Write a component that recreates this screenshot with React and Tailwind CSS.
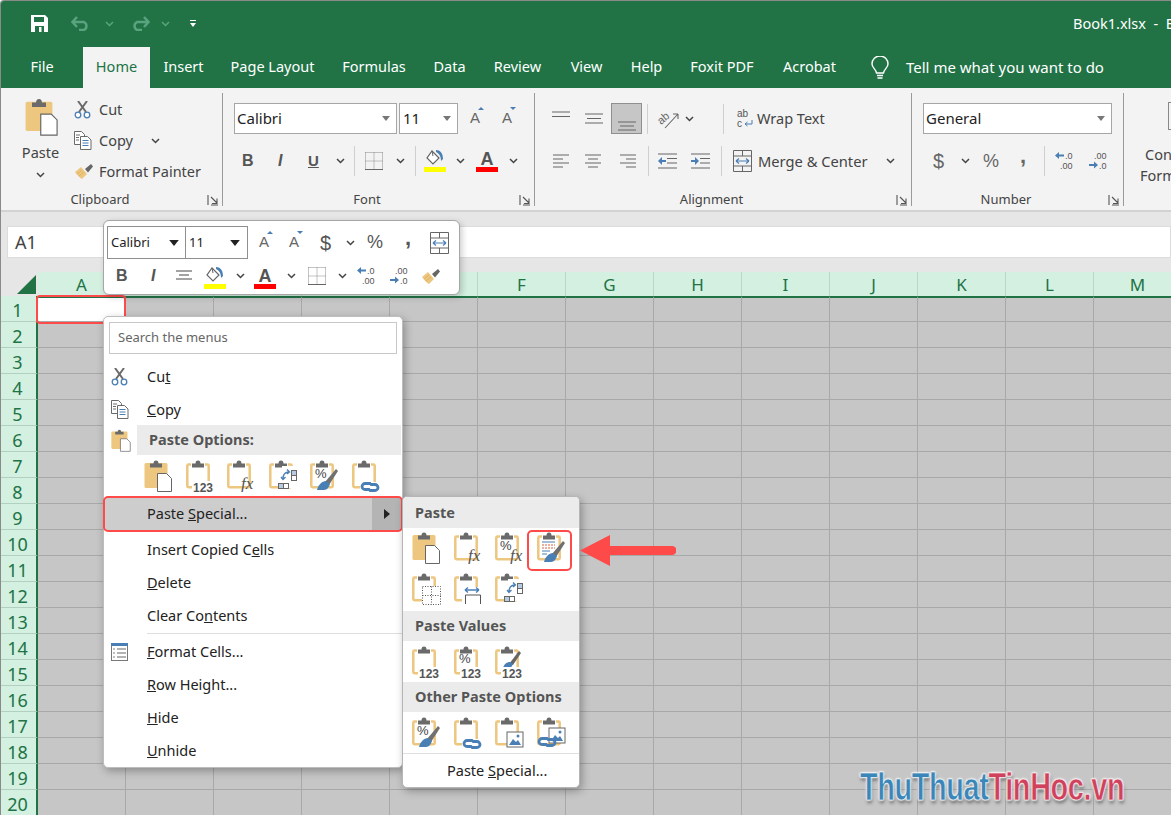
import React from "react";

const TAN = "#edc67f";
const BLUE = "#4a7fb5";
const GR = "#6a6a6a";
const SANS = "'Liberation Sans',sans-serif";

const Chev = ({ className = "", c = "#444" }) => (
  <svg width="9" height="6" viewBox="0 0 9 6" className={`shrink-0 ${className}`}><path d="M1 1l3.500 3.500L8 1" fill="none" stroke={c} strokeWidth="1.500" /></svg>
);
const Tri = ({ c = "#777", w = 8, h = 5, className = "" }) => (
  <svg width={w} height={h} viewBox="0 0 8 5" className={className}><path d="M0 0h8L4 5z" fill={c} /></svg>
);
const Launcher = () => (
  <svg width="12" height="11" viewBox="0 0 12 11" className="shrink-0"><path d="M1 0v10M4 2l6 6M10 3.500V8.500H5M4 10h7" fill="none" stroke="#555" strokeWidth="1.100" /></svg>
);
const Scissors = ({ s = 18 }) => (
  <svg width={s} height={s} viewBox="0 0 18 18"><path d="M4 0l8 11M13 0L5 11" stroke={GR} strokeWidth="2" /><circle cx="4" cy="14" r="2.800" fill="#fff" stroke={BLUE} strokeWidth="1.300" /><circle cx="13" cy="14" r="2.800" fill="#fff" stroke={BLUE} strokeWidth="1.300" /></svg>
);
const CopyIcon = () => (
  <svg width="18" height="19" viewBox="0 0 18 19"><path d="M.5.5h7l3 3v10H.5z" fill="#fff" stroke={GR} /><path d="M6.500 5.500h7l3.500 3.500v9.500H6.500z" fill="#fff" stroke={GR} /><path d="M2 4h4M2 6.500h3M2 9h3" stroke={GR} /><path d="M8.500 9.500h6M8.500 12h6M8.500 14.500h6" stroke={BLUE} /></svg>
);
const Painter = ({ s = 20 }) => (
  <svg width={s} height={s * 0.85} viewBox="0 0 20 17"><path d="M1 9l6-5 6 7-5 5C6 15 3 12 1 9z" fill={TAN} /><path d="M3 11l5-4M5 13l5-4" stroke="#d9ae62" strokeWidth=".8" /><path d="M11 6l6-5 2 2.500-5 6z" fill="#666" /></svg>
);
const Fill = () => (
  <svg width="22" height="24" viewBox="0 0 22 24"><path d="M8 2l7 7-6 6-6-6z" fill="#fff" stroke="#666" strokeWidth="1.200" /><path d="M8 2l1 5" stroke="#666" /><path d="M12 1c4 0 7 3 7 9l-2 2c0-4-1-7-5-9z" fill={BLUE} /><rect x="0" y="18" width="22" height="5" fill="#ffff00" /></svg>
);
const FontA = () => (
  <svg width="22" height="24" viewBox="0 0 22 24"><text x="11" y="16" textAnchor="middle" fontFamily={SANS} fontWeight="700" fontSize="18" fill="#555">A</text><rect x="0" y="18" width="22" height="5" fill="#f00" /></svg>
);
const GrowA = ({ up }) => (
  <svg width="16" height="19" viewBox="0 0 16 19"><text x="6" y="16" textAnchor="middle" fontFamily={SANS} fontSize="15" fill="#666">A</text><path d={up ? "M9 3h6l-3-3z" : "M9 0h6l-3 3z"} fill={BLUE} /></svg>
);
const Borders = () => (
  <svg width="18" height="18" viewBox="0 0 18 18" className="shrink-0"><path d="M.5.5h17M.5 9h17M9 .5v17M.5.5v17M17.5.5v17" fill="none" stroke="#888" strokeDasharray="1 1" /><path d="M0 17.500h18" stroke="#666" /></svg>
);
const Lines = ({ w = 20, ys, xs }) => (
  <svg width={w} height="16" viewBox={`0 0 ${w} 16`} className="shrink-0">
    {ys.map((y, i) => <path key={i} d={`M${xs[i][0]} ${y}H${xs[i][1]}`} stroke="#666" strokeWidth="1.200" />)}
  </svg>
);
const Merge = () => (
  <svg width="19" height="22" viewBox="0 0 19 22" className="shrink-0"><path d="M.5.5h18v21H.5zM.5 6h18M.5 16h18M9.500.5V6M9.500 16v5.500" fill="none" stroke="#666" /><path d="M3 11h13M3 11l3-2.500M3 11l3 2.500M16 11l-3-2.500M16 11l-3 2.500" fill="none" stroke={BLUE} strokeWidth="1.200" /></svg>
);
const Indent = ({ rev }) => (
  <svg width="19" height="16" viewBox="0 0 19 16"><path d="M0 1h19M9 5.500h10M9 10h10M0 15h19" stroke="#666" strokeWidth="1.100" /><path d={rev ? "M0 8l4-4v3h4v2H4v3z" : "M8 8L4 4v3H0v2h4v3z"} fill={BLUE} /></svg>
);
const Dec = ({ inc }) => (
  <svg width="20" height="20" viewBox="0 0 20 20" fontFamily={SANS} fontSize="9" fill="#555" className="shrink-0">
    {inc ? <><text x="5" y="8">.00</text><text x="10" y="18">.0</text><path d="M9 14l-4-3.500v2.500H0v2h5v2.500z" fill={BLUE} /></> : <><text x="10" y="8">.0</text><text x="5" y="18">.00</text><path d="M0 4.500l4-3.500v2.500h5v2H4V8z" fill={BLUE} /></>}
  </svg>
);
const Wrap = () => (
  <svg width="16" height="20" viewBox="0 0 16 20" fontFamily={SANS} fontSize="10" fill="#555"><text x="0" y="8">ab</text><text x="0" y="18">c</text><path d="M15 11v4H8m0 0l2.500-2M8 15l2.500 2" fill="none" stroke={BLUE} /></svg>
);
const Orient = () => (
  <svg width="24" height="20" viewBox="0 0 24 20" className="overflow-visible"><text x="1" y="12" transform="rotate(-40 8 10)" fontFamily={SANS} fontSize="11" fill="#666">ab</text><path d="M8 19L21 5m0 0h-5m5 0v5" fill="none" stroke="#666" strokeWidth="1.100" /></svg>
);
const Sep = ({ className = "" }) => <div className={`w-px h-[30px] bg-[#cfcfcf] shrink-0 ${className}`} />;

const T123 = ({ x = 7 }) => <><rect x={x - 1} y="21" width={31 - x} height="11" fill="#fff" /><text x={x} y="31.500" fontFamily={SANS} fontWeight="700" fontSize="12" fill="#555">123</text></>;
const Fx = ({ x = 14 }) => <text x={x} y="29" fontFamily="'Liberation Serif',serif" fontStyle="italic" fontSize="17" fill="#555">fx</text>;
const Pct = ({ x = 5, y = 18 }) => <text x={x} y={y} fontFamily={SANS} fontSize="13" fill="#444">%</text>;
const BrushO = () => <><path d="M15 22L26 9l2 2-9 14z" fill="#707070" /><path d="M7 30c1-5 5-9 9-9l4 3c-1 3-3 6-6 6z" fill={BLUE} /></>;
const Link = ({ y = 23, x = 0, bg = true }) => <>{bg && <rect x={x + 8} y={y - 1} width="21" height="10" fill="#fff" />}<path d={`M${x + 17} ${y + 6.5}h-4a3 3 0 010-6h5M${x + 19} ${y + 1.5}h4a3 3 0 010 6h-5`} fill="none" stroke={BLUE} strokeWidth="2.800" strokeLinecap="round" /></>;
const Doc = () => <path d="M13.500 13.500h9l5 5v13h-14z" fill="#fff" stroke="#666" />;
const Trans = () => <><rect x="13" y="6" width="15" height="22" fill="#fff" /><rect x="22.500" y="10.500" width="5" height="5" fill="#b6cbe0" stroke="#666" /><rect x="22.500" y="15.500" width="5" height="5" fill="#fff" stroke="#666" /><rect x="9.500" y="23.500" width="5" height="5" fill="#b6cbe0" stroke="#666" /><rect x="14.500" y="23.500" width="5" height="5" fill="#fff" stroke="#666" /><path d="M20 12c-4 0-6 2-6 7m-2-2l2 2.500 2.500-2.500M18 9.500l2.500 2.500L18 14" fill="none" stroke={BLUE} strokeWidth="1.300" /></>;
const Pic = ({ x = 12, y = 15 }) => <><rect x={x} y={y} width="16" height="15" fill="#fff" stroke="#666" /><path d={`M${x + 2} ${y + 13}l4-6 3 3 2-2 3 5z`} fill={BLUE} /><circle cx={x + 11} cy={y + 4} r="1.500" fill={BLUE} /></>;

const Clip = ({ kind = "", full, w = 30, h = 32, className = "" }) => (
  <svg width={w} height={h} viewBox="0 0 30 32" className={`shrink-0 ${className}`}>
    {full ? <rect x="0.500" y="3" width="23" height="25" rx="1.500" fill={TAN} /> : <path d="M5 4.500H2.500a1.200 1.200 0 00-1.200 1.200V26a1.200 1.200 0 001.200 1.200h19a1.200 1.200 0 001.200-1.200V5.700a1.200 1.200 0 00-1.200-1.200H19" fill="none" stroke={TAN} strokeWidth="2.500" />}
    <path d="M6 7.500V3.500h3.500Q9.500.5 12 .5t2.500 3H18v4z" fill={GR} />
    {kind === "doc" && <Doc />}
    {kind === "123" && <T123 />}
    {kind === "fx" && <Fx />}
    {kind === "pctfx" && <><Pct /><Fx x={15} /></>}
    {kind === "trans" && <Trans />}
    {kind === "pctbrush" && <><Pct /><BrushO /></>}
    {kind === "link" && <Link />}
    {kind === "fmt" && <><path d="M5 10h13" stroke={BLUE} /><path d="M5 13h13M5 16h13" stroke="#d9603b" strokeDasharray="2 1" /><path d="M5 19h8M5 22h5" stroke={BLUE} /><BrushO /></>}
    {kind === "border" && <><rect x="10" y="13" width="19" height="19" fill="#fff" /><path d="M10.500 13.500h18v18h-18zM10.500 22.500h18M19.500 13.500v18" fill="none" stroke="#555" strokeDasharray="1 1.500" /></>}
    {kind === "colw" && <><rect x="8" y="14" width="22" height="18" fill="#fff" /><path d="M11 17h14M11 17l3-2.500M11 17l3 2.500M25 17l-3-2.500M25 17l-3 2.500" fill="none" stroke={BLUE} strokeWidth="1.400" /><path d="M11.500 31v-9h15v9" fill="none" stroke="#555" /></>}
    {kind === "pct123" && <><Pct x={5} y={17} /><T123 /></>}
    {kind === "brush123" && <><path d="M14 18L24 5l2 2-8 12z" fill="#666" /><path d="M8 22c1-4 4-6 7-6l3 2c-1 2-2 4-3 4z" fill={BLUE} /><T123 /></>}
    {kind === "pic" && <Pic />}
    {kind === "linkpic" && <><Pic x={12} y={11} /><Link x={-8} y={21} bg={false} /></>}
  </svg>
);

const Tab = ({ w, children, active }) => (
  <div className={`${w} h-full flex items-center justify-center shrink-0 pb-[1px] ${active ? "bg-[#f3f3f3] text-[#217346]" : "text-white"}`}>{children}</div>
);

const Group = ({ w, label, children }) => (
  <div className={`${w} shrink-0 flex flex-col relative`}>
    <div className="h-[102px] flex flex-col">{children}</div>
    <div className="h-[20px] flex items-center text-[13px] text-[#444] pl-[12px] pr-[4px]">
      <span className="flex-1 text-center pr-[20px]">{label}</span>
      <Launcher />
    </div>
    <div className="absolute right-0 top-[5px] bottom-[4px] w-px bg-[#9a9a9a]" />
  </div>
);

const Menu = ({ icon, children }) => (
  <div className="h-[33px] flex items-center text-[14.500px] text-[#222] shrink-0">
    <div className="w-[43px] flex justify-start pl-[7px] shrink-0">{icon}</div>
    {children}
  </div>
);
const SubHead = ({ children, className = "" }) => (
  <div className={`h-[30px] bg-[#ebebeb] flex items-center pl-[12px] font-bold text-[14.500px] text-[#555] shrink-0 ${className}`}>{children}</div>
);
const IconRow = ({ items, className = "" }) => (
  <div className={`flex gap-[11.500px] pl-[9px] ${className}`}>
    {items.map((k, i) => <Clip key={i} kind={k} full={k === "doc"} />)}
  </div>
);

const cols = "ABCDEFGHIJKLM".split("");
const rows = Array.from({ length: 20 }, (_, i) => i + 1);

export default function App() {
  return (
    <div className="relative w-[1171px] h-[815px] overflow-hidden bg-[#e6e6e6] border-t border-l border-[#8a8a8a] rounded-tl-[4px]" style={{ fontFamily: "'Noto Sans',sans-serif" }}>
      {/* Title bar */}
      <div className="h-[45px] bg-[#217346] flex items-center text-white relative">
        <svg width="17" height="17" viewBox="0 0 17 17" className="ml-[30px] shrink-0"><path d="M0 0h14l3 3v14H0z" fill="#fff" /><rect x="3" y="2" width="10" height="5" fill="#217346" /><rect x="4" y="11" width="9" height="6" fill="#217346" /><rect x="8" y="12" width="2.500" height="5" fill="#fff" /></svg>
        <svg width="19" height="15" viewBox="0 0 19 15" className="ml-[23px] shrink-0"><path d="M2 6h11a4.500 4.500 0 010 8H8M6 1L1.500 6 6 11" fill="none" stroke="#5aa37f" strokeWidth="2.500" /></svg>
        <Chev c="#5aa37f" className="ml-[15px]" />
        <svg width="19" height="15" viewBox="0 0 19 15" className="ml-[17px] shrink-0"><path d="M17 6H6a4.500 4.500 0 000 8h5M13 1l4.500 5-4.500 5" fill="none" stroke="#5aa37f" strokeWidth="2.500" /></svg>
        <Chev c="#5aa37f" className="ml-[11px]" />
        <svg width="6" height="7" viewBox="0 0 6 7" className="ml-[20px]"><path d="M0 0h6v1H0zM0 3h6L3 7z" fill="#fff" /></svg>
        <div className="ml-auto text-[14.500px] whitespace-nowrap w-[98px] pt-[1px]">Book1.xlsx&nbsp; -&nbsp; E</div>
      </div>
      {/* Tabs */}
      <div className="h-[42px] bg-[#217346] flex items-end text-[14.500px]">
        <div className="flex h-[41px] w-full">
          <Tab w="w-[82px]">File</Tab>
          <Tab w="w-[67px]" active>Home</Tab>
          <Tab w="w-[67px]">Insert</Tab>
          <Tab w="w-[111px]">Page Layout</Tab>
          <Tab w="w-[92px]">Formulas</Tab>
          <Tab w="w-[59px]">Data</Tab>
          <Tab w="w-[77px]">Review</Tab>
          <Tab w="w-[61px]">View</Tab>
          <Tab w="w-[59px]">Help</Tab>
          <Tab w="w-[92px]">Foxit PDF</Tab>
          <Tab w="w-[83px]">Acrobat</Tab>
          <svg width="18" height="24" viewBox="0 0 18 24" className="self-center ml-[20px] shrink-0"><path d="M5.500 17C5 13 1 12 1 8a8 8 0 0116 0c0 4-4 5-4.500 9z" fill="none" stroke="#fff" strokeWidth="1.400" /><path d="M6 19.500h6M6.500 22h5" stroke="#fff" strokeWidth="1.600" /></svg>
          <div className="self-center ml-[17px] text-white whitespace-nowrap text-[15px] pb-[1px]">Tell me what you want to do</div>
        </div>
      </div>
      {/* Ribbon */}
      <div className="h-[124px] bg-[#f3f3f3] flex text-[#444] border-b-2 border-[#d2d2d2] overflow-hidden">
        <Group w="w-[222px]" label="Clipboard">
          <div className="flex pt-[6px]">
            <div className="w-[73px] flex flex-col items-center pl-[9px] shrink-0 pt-[4px]">
              <Clip kind="doc" full w={35} h={38} />
              <span className="text-[14.500px] mt-[6px] leading-[20px] mr-[3px]">Paste</span>
              <Chev className="mt-[10px] mr-[3px]" />
            </div>
            <div className="flex flex-col text-[14.500px] whitespace-nowrap">
              <div className="h-[31px] flex items-center gap-[7px]"><Scissors /><span>Cut</span></div>
              <div className="h-[31px] flex items-center gap-[7px]"><CopyIcon /><span>Copy</span><Chev className="ml-[11px]" /></div>
              <div className="h-[31px] flex items-center gap-[5px]"><Painter /><span>Format Painter</span></div>
            </div>
          </div>
        </Group>
        <Group w="w-[312px]" label="Font">
          <div className="flex items-center pt-[15px] pl-[11px]">
            <div className="w-[163px] h-[31px] bg-white border border-[#a6a6a6] flex items-center justify-between px-[2px] pr-[6px] text-[15px] text-[#222]">Calibri<Tri /></div>
            <div className="w-[59px] h-[31px] ml-[2px] bg-white border border-[#a6a6a6] flex items-center justify-between px-[3px] pr-[6px] text-[15px] text-[#222]">11<Tri /></div>
            <div className="ml-[11px] -mt-[5px]"><GrowA up /></div>
            <div className="ml-[16px] -mt-[5px]"><GrowA /></div>
          </div>
          <div className="flex items-center h-[30px] mt-[12px] pl-[19px]">
            <span className="w-[36px] font-bold text-[16px] text-[#555]" style={{ fontFamily: SANS }}>B</span>
            <span className="w-[30px] italic font-bold text-[16px] text-[#555]" style={{ fontFamily: SANS }}>I</span>
            <span className="w-[28px] underline font-bold text-[15px] text-[#555]" style={{ fontFamily: SANS }}>U</span>
            <Chev />
            <Sep className="ml-[9px]" />
            <div className="ml-[10px]"><Borders /></div>
            <Chev className="ml-[13px]" />
            <Sep className="ml-[10px]" />
            <div className="ml-[8px]"><Fill /></div>
            <Chev className="ml-[10px]" />
            <div className="ml-[11px]"><FontA /></div>
            <Chev className="ml-[11px]" />
          </div>
        </Group>
        <Group w="w-[377px]" label="Alignment">
          <div className="flex items-center pt-[15px] h-[46px] pl-[16px]">
            <Lines w={20} ys={[1, 5.5]} xs={[[1, 19], [1, 19]]} />
            <div className="ml-[13px]"><Lines w={20} ys={[3, 7.5, 12]} xs={[[1, 19], [3, 17], [1, 19]]} /></div>
            <div className="w-[31px] h-[31px] ml-[7px] bg-[#c6c6c6] border border-[#8f8f8f] flex items-end justify-center pb-[1px] shrink-0"><Lines w={20} ys={[6, 10, 14]} xs={[[1, 19], [3, 17], [1, 19]]} /></div>
            <Sep className="ml-[5px]" />
            <div className="ml-[9px]"><Orient /></div>
            <Chev className="ml-[4px]" />
            <Sep className="ml-[29px]" />
            <div className="ml-[13px]"><Wrap /></div>
            <span className="ml-[4px] text-[14.500px] whitespace-nowrap">Wrap Text</span>
          </div>
          <div className="flex items-center h-[30px] mt-[12px] pl-[18px]">
            <Lines w={17} ys={[2, 6, 10, 14]} xs={[[0, 16], [0, 10], [0, 16], [0, 10]]} />
            <div className="ml-[15px]"><Lines w={17} ys={[2, 6, 10, 14]} xs={[[0, 16], [3, 13], [0, 16], [3, 13]]} /></div>
            <div className="ml-[18px]"><Lines w={17} ys={[2, 6, 10, 14]} xs={[[0, 16], [6, 16], [0, 16], [6, 16]]} /></div>
            <Sep className="ml-[11px]" />
            <div className="ml-[9px]"><Indent rev /></div>
            <div className="ml-[14px]"><Indent /></div>
            <Sep className="ml-[11px]" />
            <div className="ml-[11px]"><Merge /></div>
            <span className="ml-[6px] w-[122px] text-[14.700px] whitespace-nowrap">Merge &amp; Center</span>
            <Chev className="ml-[6px]" />
          </div>
        </Group>
        <Group w="w-[212px]" label="Number">
          <div className="pt-[15px] pl-[11px]">
            <div className="w-[189px] h-[31px] bg-white border border-[#a6a6a6] flex items-center justify-between px-[2px] pr-[6px] text-[15px] text-[#222]">General<Tri /></div>
          </div>
          <div className="flex items-center h-[30px] mt-[12px] pl-[21px]">
            <span className="text-[20px] w-[28px] text-[#666]" style={{ fontFamily: SANS }}>$</span>
            <Chev />
            <span className="text-[18px] ml-[13px] w-[37px] text-[#666]" style={{ fontFamily: SANS }}>%</span>
            <span className="text-[22px] font-bold w-[24px] text-[#666] -mt-[12px]" style={{ fontFamily: SANS }}>,</span>
            <Sep />
            <div className="ml-[10px]"><Dec /></div>
            <div className="ml-[14px]"><Dec inc /></div>
          </div>
        </Group>
        <div className="w-[48px] shrink-0 pt-[14px] text-[14.500px] leading-[21px] whitespace-nowrap overflow-hidden">
          <div className="h-[28px] ml-[44px] border-l border-t border-b border-[#888]" />
          <div className="mt-[14px] ml-[21px]">Conditional</div>
          <div className="ml-[16px]">Formatting</div>
        </div>
      </div>
      {/* Formula bar */}
      <div className="h-[60px] bg-[#e6e6e6] flex items-start pt-[14px] pl-[6px]">
        <div className="w-full h-[32px] bg-white border border-[#dcdcdc] text-[18px] text-[#444] pl-[7px] flex items-center">A1</div>
      </div>
      {/* Grid */}
      <div className="grid grid-cols-[37px_repeat(13,88px)] auto-rows-[26px] text-[18px] leading-none">
        <div className="h-[24px] bg-[#e6e6e6] flex items-end justify-end pr-[2px] pb-[2px]">
          <svg width="19" height="19" viewBox="0 0 19 19"><path d="M19 0v19H0z" fill="#217346" /></svg>
        </div>
        {cols.map((c) => (
          <div key={c} className="h-[24px] bg-[#d3f0e0] border-r border-[#b9d9c7] text-[#217346] flex items-center justify-center text-[17px]">{c}</div>
        ))}
        {rows.map((r) => (
          <React.Fragment key={r}>
            <div className="bg-[#d3f0e0] border-b border-[#b3cfbf] border-r-[2px] border-r-[#217346] text-[#217346] flex items-center justify-center pr-[2px] pt-[2px] -mt-[2px] h-[26px]">{r}</div>
            {cols.map((c) => (
              <div key={c} className={`-mt-[2px] h-[26px] border-r border-b border-[#a8a8a8] ${r === 1 && c === "A" ? "bg-white" : "bg-[#c6c6c6]"} ${r === 1 ? "border-t-2 border-t-[#217346]" : ""}`} />
            ))}
          </React.Fragment>
        ))}
      </div>

      {/* A1 highlight */}
      <div className="absolute left-[35px] top-[294px] w-[90px] h-[29px] border-[2.500px] border-[#ff4a4a] rounded-[4px]" />

      {/* Mini toolbar */}
      <div className="absolute left-[102px] top-[219px] w-[357px] h-[75px] bg-white border border-[#a6a6a6] rounded-[6px] shadow-[2px_2px_6px_rgba(0,0,0,0.2)] text-[#555]">
        <div className="flex items-center mt-[5px] ml-[3px] h-[33px]">
          <div className="w-[79px] h-[33px] border border-[#8f8f8f] flex items-center justify-between pl-[3px] pr-[6px] text-[13px] text-[#222] shrink-0">Calibri<Tri c="#222" w={10} h={6} /></div>
          <div className="w-[62px] h-[33px] border border-l-0 border-[#8f8f8f] flex items-center justify-between pl-[3px] pr-[7px] text-[13px] text-[#222] shrink-0">11<Tri c="#222" w={10} h={6} /></div>
          <div className="ml-[10px] -mt-[4px]"><GrowA up /></div>
          <div className="ml-[14px] -mt-[4px]"><GrowA /></div>
          <span className="ml-[16px] w-[20px] text-[20px]" style={{ fontFamily: SANS }}>$</span>
          <Chev className="ml-[6px]" />
          <span className="ml-[12px] w-[36px] text-[18px]" style={{ fontFamily: SANS }}>%</span>
          <span className="w-[27px] text-[22px] font-bold -mt-[10px] pl-[2px]" style={{ fontFamily: SANS }}>,</span>
          <Merge />
        </div>
        <div className="flex items-center h-[30px] mt-[2px] ml-[12px]">
          <span className="w-[35px] font-bold text-[16px]" style={{ fontFamily: SANS }}>B</span>
          <span className="w-[25px] italic font-bold text-[16px]" style={{ fontFamily: SANS }}>I</span>
          <Lines w={17} ys={[3, 7, 11]} xs={[[0, 16], [3, 13], [0, 16]]} />
          <div className="ml-[11px] pt-[3px]"><Fill /></div>
          <Chev className="ml-[10px]" />
          <div className="ml-[9px] pt-[3px]"><FontA /></div>
          <Chev className="ml-[11px]" />
          <div className="ml-[12px]"><Borders /></div>
          <Chev className="ml-[12px]" />
          <div className="ml-[10px]"><Dec /></div>
          <div className="ml-[13px]"><Dec inc /></div>
          <div className="ml-[11px]"><Painter /></div>
        </div>
      </div>

      {/* Context menu */}
      <div className="absolute left-[102px] top-[315px] w-[300px] h-[452px] bg-white border border-[#bdbdbd] rounded-[5px] shadow-[2px_3px_8px_rgba(0,0,0,0.3)] flex flex-col">
        <div className="mx-[5px] mt-[5px] h-[32px] border border-[#c8c8c8] text-[13px] text-[#666] pl-[8px] flex items-center shrink-0">Search the menus</div>
        <div className="h-[6px] shrink-0" />
        <Menu icon={<Scissors />}><span>Cu<u>t</u></span></Menu>
        <Menu icon={<CopyIcon />}><span><u>C</u>opy</span></Menu>
        <div className="h-[30px] -mt-px flex shrink-0">
          <div className="w-[33px] flex justify-center items-center pl-[2px]"><Clip kind="doc" full w={21} h={23} /></div>
          <div className="flex-1 bg-[#ebebeb] flex items-center pl-[12px] font-bold text-[14.500px] text-[#555] mr-px">Paste Options:</div>
        </div>
        <div className="h-[41px] pt-[5px] shrink-0"><IconRow items={["doc", "123", "fx", "trans", "pctbrush", "link"]} className="!pl-[40px]" /></div>
        <div className="h-[33px] flex shrink-0 text-[14.500px] text-[#222] mt-[1px] mx-px">
          <div className="flex-1 bg-[#cdcdcd] flex items-center pl-[42px]"><span>Paste <u>S</u>pecial...</span></div>
          <div className="w-[29px] bg-[#b4b4b4] flex items-center justify-center"><svg width="6" height="10" viewBox="0 0 6 10"><path d="M0 0l6 5-6 5z" fill="#222" /></svg></div>
        </div>
        <div className="h-[3px] shrink-0" />
        <Menu><span>Insert Copied C<u>e</u>lls</span></Menu>
        <Menu><span><u>D</u>elete</span></Menu>
        <Menu><span>Clear Co<u>n</u>tents</span></Menu>
        <div className="h-[3px] ml-[43px] shrink-0"><div className="h-px bg-[#dedede] mt-px" /></div>
        <Menu icon={<svg width="17" height="18" viewBox="0 0 17 18"><rect x=".5" y="2" width="16" height="15.500" fill="#fff" stroke="#777" /><rect width="17" height="3" fill={BLUE} /><path d="M6 6h9M6 10h9M6 14h9" stroke="#666" /><path d="M2.500 6h1.500M2.500 10h1.500M2.500 14h1.500" stroke="#555" strokeWidth="1.500" strokeDasharray="1 .5" /></svg>}><span><u>F</u>ormat Cells...</span></Menu>
        <Menu><span><u>R</u>ow Height...</span></Menu>
        <Menu><span><u>H</u>ide</span></Menu>
        <Menu><span><u>U</u>nhide</span></Menu>
      </div>
      <div className="absolute left-[102px] top-[495px] w-[300px] h-[36px] border-[2.500px] border-[#ff4a4a] rounded-[5px]" />

      {/* Submenu */}
      <div className="absolute left-[401px] top-[495px] w-[178px] h-[292px] bg-white border border-[#b5b5b5] rounded-[5px] shadow-[2px_3px_8px_rgba(0,0,0,0.3)] flex flex-col overflow-hidden">
        <SubHead className="h-[31px]">Paste</SubHead>
        <div className="h-[83px] pt-[4px] flex flex-col gap-[9px] shrink-0">
          <IconRow items={["doc", "fx", "pctfx", "fmt"]} />
          <IconRow items={["border", "colw", "trans"]} />
        </div>
        <SubHead>Paste Values</SubHead>
        <div className="h-[41px] pt-[5px] shrink-0"><IconRow items={["123", "pct123", "brush123"]} /></div>
        <SubHead>Other Paste Options</SubHead>
        <div className="h-[41px] pt-[5px] shrink-0"><IconRow items={["pctbrush", "link", "pic", "linkpic"]} /></div>
        <div className="h-px bg-[#e0e0e0] shrink-0" />
        <div className="flex-1 flex items-center pl-[44px] text-[14.500px] text-[#222]"><span>Paste <u>S</u>pecial...</span></div>
      </div>
      <div className="absolute left-[526px] top-[529px] w-[45px] h-[41px] border-[2.500px] border-[#ff4a4a] rounded-[5px]" />
      <svg width="96" height="31" viewBox="0 0 96 31" className="absolute left-[579px] top-[534px]"><path d="M0 15.500L30 0v11h62a4.500 4.500 0 010 9H30v11z" fill="#ff4a4a" /></svg>

      {/* Watermark */}
      <div className="absolute left-[859px] top-[758px] origin-left scale-x-[0.76] whitespace-nowrap text-[38px] font-bold tracking-[-0.5px] [-webkit-text-stroke:0.5px_#fff] [text-shadow:0_0_3px_#fff,0_0_3px_#fff,1px_3px_4px_rgba(0,0,0,0.5)]" style={{ fontFamily: SANS }}>
        <span className="text-[#3b86b8]">ThuThuat</span><span className="text-[#d0415c]">TinHoc.vn</span>
      </div>
    </div>
  );
}
